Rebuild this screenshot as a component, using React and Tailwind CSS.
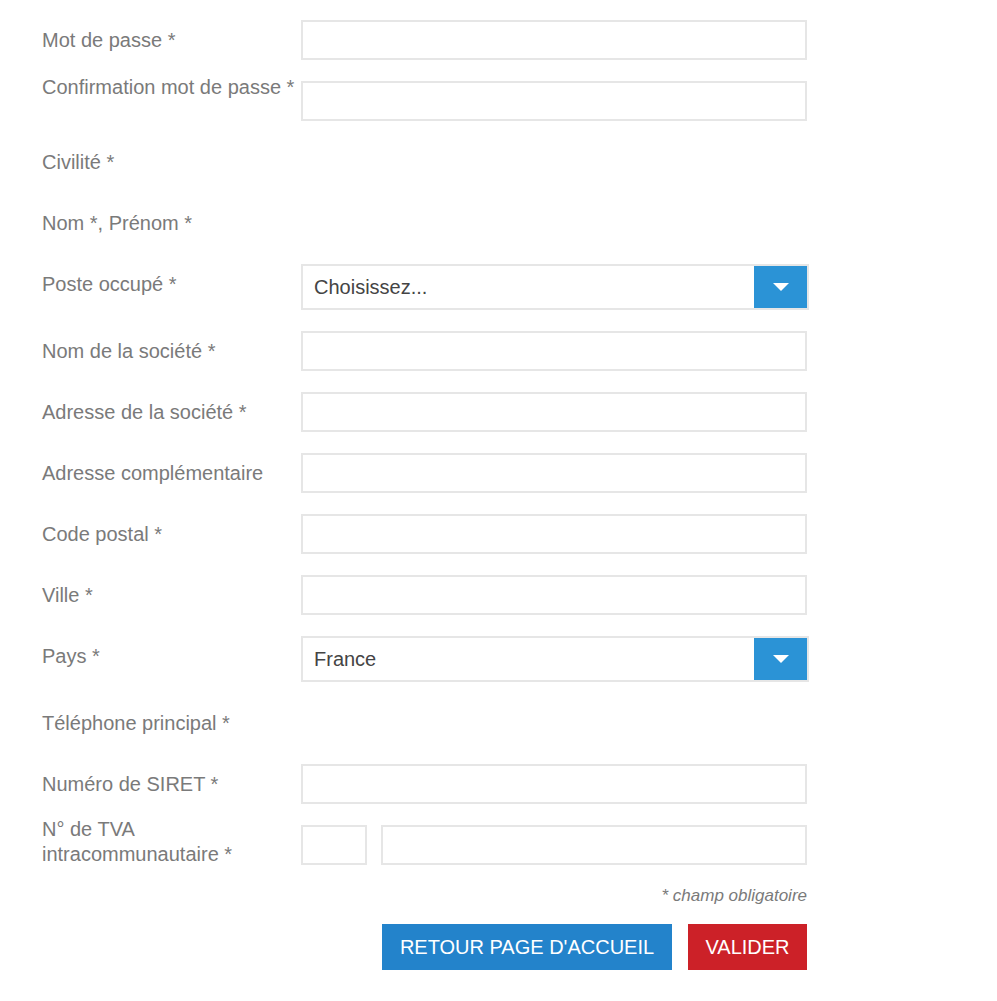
import React from 'react';

const FONT = { fontFamily: '"Liberation Sans", Arial, sans-serif' };

function Label({ children, className = '' }) {
  return (
    <div className={`w-[259px] shrink-0 text-[20px] leading-[20px] text-[#7a7a7a] ${className}`}>
      {children}
    </div>
  );
}

function TextInput({ className = 'w-[506px]' }) {
  return <input type="text" className={`h-[40px] shrink-0 border-2 border-[#e6e6e6] bg-white outline-none ${className}`} />;
}

function Select({ value }) {
  return (
    <div className="flex h-[46px] w-[508px] shrink-0 items-stretch border-2 border-[#e6e6e6] bg-white">
      <div className="flex flex-1 items-center pl-[11px] text-[20px] text-[#444]">{value}</div>
      <div className="flex w-[53px] items-center justify-center bg-[#2b93d6]">
        <svg width="16" height="8" viewBox="0 0 16 8">
          <path d="M0 0 L16 0 L8 8 Z" fill="#fff" />
        </svg>
      </div>
    </div>
  );
}

function Row({ label, labelClass = 'pt-[10px]', children, h = 'h-[40px]' }) {
  return (
    <div className={`flex items-start ${h}`}>
      <Label className={labelClass}>{label}</Label>
      {children}
    </div>
  );
}

export default function App() {
  return (
    <div className="min-h-[1001px] bg-white pl-[42px] pt-[20px]" style={FONT}>
      <div className="flex w-[770px] flex-col gap-[21px]">
        <Row label="Mot de passe *">
          <TextInput />
        </Row>
        <Row label="Confirmation mot de passe *" labelClass="-mt-[4px] whitespace-nowrap">
          <TextInput />
        </Row>
        <Row label="Civilité *" />
        <Row label="Nom *, Prénom *" />
        <Row label="Poste occupé *" h="h-[46px]">
          <Select value="Choisissez..." />
        </Row>
        <Row label="Nom de la société *">
          <TextInput />
        </Row>
        <Row label="Adresse de la société *">
          <TextInput />
        </Row>
        <Row label="Adresse complémentaire">
          <TextInput />
        </Row>
        <Row label="Code postal *">
          <TextInput />
        </Row>
        <Row label="Ville *">
          <TextInput />
        </Row>
        <Row label="Pays *" h="h-[46px]">
          <Select value="France" />
        </Row>
        <Row label="Téléphone principal *" />
        <Row label="Numéro de SIRET *">
          <TextInput />
        </Row>
        <Row label={<>N° de TVA<br />intracommunautaire *</>} labelClass="-mt-[8px] leading-[25px]">
          <div className="flex shrink-0 gap-[14px]">
            <TextInput className="w-[66px]" />
            <TextInput className="w-[426px]" />
          </div>
        </Row>
      </div>
      <div className="mt-[22px] w-[765px] text-right text-[17px] italic leading-[18px] text-[#7a7a7a]">
        * champ obligatoire
      </div>
      <div className="mt-[19px] flex w-[765px] justify-end gap-[16px]">
        <button className="h-[46px] w-[290px] bg-[#2383cb] text-[20px] uppercase text-white">
          Retour page d'accueil
        </button>
        <button className="h-[46px] w-[119px] bg-[#cc2128] text-[20px] uppercase text-white">
          Valider
        </button>
      </div>
    </div>
  );
}
